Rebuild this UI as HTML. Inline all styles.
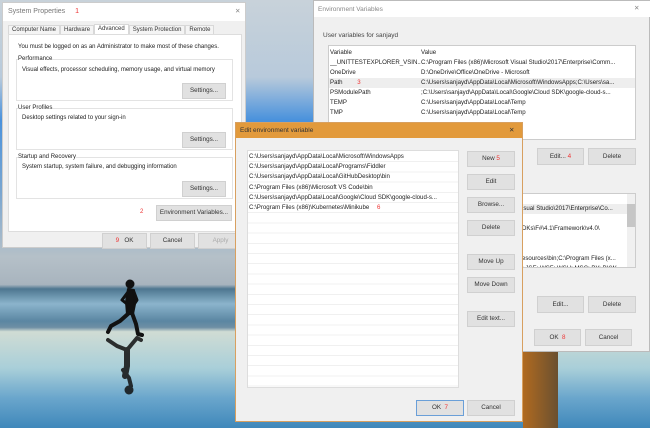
<!DOCTYPE html>
<html><head><meta charset="utf-8"><style>
*{margin:0;padding:0;box-sizing:border-box}
body{width:650px;height:428px;overflow:hidden;position:relative;font-family:"Liberation Sans",sans-serif;font-size:6.5px;color:#222;
background:linear-gradient(180deg,#c8d2da 0%,#b8cadb 18%,#4a92dc 28%,#7aa6d0 45%,#b5c0c8 60%,#a8b4be 66.5%,#4d7690 67.5%,#8bb4cc 71%,#5b86a2 75%,#6e8fa4 76.5%,#d0dcd4 77.5%,#a9cfd9 86%,#6aa6cc 93%,#3f88ba 100%)}
.a{position:absolute}
.w{position:absolute;background:#fff;border:1px solid #9aa}
.btn{position:absolute;background:#e1e1e1;border:1px solid #d0d0d0;text-align:center;line-height:14px;font-size:6.3px;color:#333}
.r{color:#e33}
.g{position:absolute;border:1px solid #e3e3e3;background:#fff}
</style></head><body>
<!-- runner -->
<svg class="a" style="left:95px;top:270px" width="60" height="130" viewBox="0 0 60 130">
<g fill="#111" stroke="#111" stroke-linecap="round" stroke-linejoin="round">
<circle cx="35" cy="14" r="4.5" stroke="none"/>
<path d="M33 19 L39 20 L40 34 L38 44 L32 44 L31 32 Z" stroke-width="2"/>
<path d="M33 22 L27 30 L32 34" fill="none" stroke-width="3"/>
<path d="M39 22 L42 30 L40 33" fill="none" stroke-width="3"/>
<path d="M34 43 L25 51 L16 56 L13 62" fill="none" stroke-width="4"/>
<path d="M37 43 L41 54 L43 64 L47 65" fill="none" stroke-width="4"/>
<g opacity=".85">
<path d="M13 70 L22 76 L32 80 L42 68 L46 70" fill="none" stroke-width="4"/>
<path d="M32 80 L32 96 L30 106" fill="none" stroke-width="6"/>
<path d="M28 100 L34 108 L36 116" fill="none" stroke-width="4"/>
<circle cx="34" cy="120" r="4.5" stroke="none"/>
</g></g></svg>
<div class="a" style="left:523px;top:352px;width:35px;height:76px;background:linear-gradient(90deg,#b06a20,#6a5030)"></div>

<!-- System Properties -->
<div class="w" style="left:2px;top:2px;width:244px;height:246px;background:#f0f0f0;border-color:#ccc">
 <div class="a" style="left:0;top:0;width:242px;height:18px;background:#fff"></div>
 <div class="a" style="left:5px;top:5px;color:#777;font-size:7px">System Properties <span class="r" style="margin-left:8px">1</span></div>
 <div class="a" style="left:232px;top:4px;color:#888">✕</div>
 <div class="a" style="left:5px;top:22px;color:#333;white-space:nowrap;font-size:6px">
  <span style="display:inline-block;border:1px solid #d8d8d8;padding:1px 3px;background:#f4f4f4">Computer Name</span><span style="display:inline-block;border:1px solid #d8d8d8;padding:1px 3px;background:#f4f4f4">Hardware</span><span style="display:inline-block;border:1px solid #d8d8d8;border-bottom:none;padding:1px 3px 2px;background:#fff;position:relative;top:-1px">Advanced</span><span style="display:inline-block;border:1px solid #d8d8d8;padding:1px 3px;background:#f4f4f4">System Protection</span><span style="display:inline-block;border:1px solid #d8d8d8;padding:1px 3px;background:#f4f4f4">Remote</span></div>
 <div class="a" style="left:5px;top:31px;width:234px;height:198px;background:#fff;border:1px solid #ddd;font-size:6px">
  <div class="a" style="left:9px;top:9px">You must be logged on as an Administrator to make most of these changes.</div>
  <div class="g" style="left:7px;top:24px;width:217px;height:42px"></div><div class="a" style="left:9px;top:21px;background:#fff">Performance</div>
  <div class="a" style="left:13px;top:32px">Visual effects, processor scheduling, memory usage, and virtual memory</div>
  <div class="btn" style="left:173px;top:48px;width:44px">Settings...</div>
  <div class="g" style="left:7px;top:73px;width:217px;height:42px"></div><div class="a" style="left:9px;top:70px;background:#fff">User Profiles</div>
  <div class="a" style="left:13px;top:80px">Desktop settings related to your sign-in</div>
  <div class="btn" style="left:173px;top:97px;width:44px">Settings...</div>
  <div class="g" style="left:7px;top:122px;width:217px;height:42px"></div><div class="a" style="left:9px;top:119px;background:#fff">Startup and Recovery</div>
  <div class="a" style="left:13px;top:129px">System startup, system failure, and debugging information</div>
  <div class="btn" style="left:173px;top:146px;width:44px">Settings...</div>
  <div class="a r" style="left:131px;top:174px">2</div>
  <div class="btn" style="left:147px;top:170px;width:76px">Environment Variables...</div>
 </div>
 <div class="btn" style="left:99px;top:230px;width:45px"><span class="r">9</span>&nbsp;&nbsp; OK</div>
 <div class="btn" style="left:147px;top:230px;width:45px">Cancel</div>
 <div class="btn" style="left:195px;top:230px;width:45px;color:#aaa">Apply</div>
</div>

<!-- Environment Variables -->
<div class="w" style="left:313px;top:0;width:337px;height:352px;background:#f0f0f0;border-color:#bbb">
 <div class="a" style="left:0;top:0;width:336px;height:16px;background:#fff"></div>
 <div class="a" style="left:4px;top:5px;color:#888;font-size:6.5px">Environment Variables</div>
 <div class="a" style="left:320px;top:3px;color:#888">✕</div>
 <div class="a" style="left:9px;top:31px;color:#444">User variables for sanjayd</div>
 <div class="a" style="left:14px;top:44px;width:308px;height:95px;background:#fff;border:1px solid #ccc;line-height:10px;font-size:6.1px;white-space:nowrap;overflow:hidden">
  <div style="padding:2px 0 0 1px;display:flex"><span style="width:91px">Variable</span>Value</div>
  <div style="display:flex;padding-left:1px"><span style="width:91px;overflow:hidden">__UNITTESTEXPLORER_VSIN...</span>C:\Program Files (x86)\Microsoft Visual Studio\2017\Enterprise\Comm...</div>
  <div style="display:flex;padding-left:1px"><span style="width:91px">OneDrive</span>D:\OneDrive\Office\OneDrive - Microsoft</div>
  <div style="display:flex;padding-left:1px;background:#eee"><span style="width:91px">Path <span class="r" style="margin-left:13px">3</span></span>C:\Users\sanjayd\AppData\Local\Microsoft\WindowsApps;C:\Users\sa...</div>
  <div style="display:flex;padding-left:1px"><span style="width:91px">PSModulePath</span>;C:\Users\sanjayd\AppData\Local\Google\Cloud SDK\google-cloud-s...</div>
  <div style="display:flex;padding-left:1px"><span style="width:91px">TEMP</span>C:\Users\sanjayd\AppData\Local\Temp</div>
  <div style="display:flex;padding-left:1px"><span style="width:91px">TMP</span>C:\Users\sanjayd\AppData\Local\Temp</div>
 </div>
 <div class="btn" style="left:223px;top:147px;width:47px;height:17px;line-height:16px">Edit... <span class="r">4</span></div>
 <div class="btn" style="left:274px;top:147px;width:48px;height:17px;line-height:16px">Delete</div>
 <div class="a" style="left:207px;top:192px;width:115px;height:75px;background:#fff;border:1px solid #ccc;line-height:10px;font-size:6.1px;white-space:nowrap;overflow:hidden">
  <div style="margin-top:10px;background:#eee">isual Studio\2017\Enterprise\Co...</div>
  <div style="margin-top:10px">DKs\F#\4.1\Framework\v4.0\</div>
  <div style="margin-top:20px">esources\bin;C:\Program Files (x...</div>
  <div>;.JSE;.WSF;.WSH;.MSC;.PY;.PYW</div>
  <div class="a" style="right:0;top:0;width:8px;height:73px;background:#f0f0f0"><div style="margin-top:10px;height:23px;background:#c6c6c6"></div></div>
 </div>
 <div class="btn" style="left:223px;top:295px;width:47px;height:17px;line-height:16px">Edit...</div>
 <div class="btn" style="left:274px;top:295px;width:48px;height:17px;line-height:16px">Delete</div>
 <div class="btn" style="left:220px;top:328px;width:47px;height:17px;line-height:16px">OK &nbsp;<span class="r">8</span></div>
 <div class="btn" style="left:271px;top:328px;width:47px;height:17px;line-height:16px">Cancel</div>
</div>

<!-- Edit environment variable -->
<div class="w" style="left:235px;top:122px;width:288px;height:300px;background:#f0f0f0;border-color:#d8a060">
 <div class="a" style="left:0;top:0;width:286px;height:15px;background:#e29a3c"></div>
 <div class="a" style="left:4px;top:4px;color:#333;font-size:6.5px">Edit environment variable</div>
 <div class="a" style="left:273px;top:3px;color:#333">✕</div>
 <div class="a" style="left:11px;top:27px;width:212px;height:238px;background:#fff;border:1px solid #ddd;line-height:10.2px;font-size:6.1px;white-space:nowrap;padding-left:1px;
 background-image:repeating-linear-gradient(180deg,transparent 0 9.2px,#f0f0f0 9.2px 10.2px);background-position:0 1px">
  <div style="margin-top:1px">C:\Users\sanjayd\AppData\Local\Microsoft\WindowsApps</div>
  <div>C:\Users\sanjayd\AppData\Local\Programs\Fiddler</div>
  <div>C:\Users\sanjayd\AppData\Local\GitHubDesktop\bin</div>
  <div>C:\Program Files (x86)\Microsoft VS Code\bin</div>
  <div>C:\Users\sanjayd\AppData\Local\Google\Cloud SDK\google-cloud-s...</div>
  <div>C:\Program Files (x86)\Kubernetes\Minikube <span class="r" style="margin-left:6px">6</span></div>
 </div>
 <div class="btn" style="left:231px;top:28px;width:48px;height:16px">New <span class="r">5</span></div>
 <div class="btn" style="left:231px;top:51px;width:48px;height:16px">Edit</div>
 <div class="btn" style="left:231px;top:74px;width:48px;height:16px">Browse...</div>
 <div class="btn" style="left:231px;top:97px;width:48px;height:16px">Delete</div>
 <div class="btn" style="left:231px;top:131px;width:48px;height:16px">Move Up</div>
 <div class="btn" style="left:231px;top:154px;width:48px;height:16px">Move Down</div>
 <div class="btn" style="left:231px;top:188px;width:48px;height:16px">Edit text...</div>
 <div class="btn" style="left:180px;top:277px;width:48px;height:16px;border-color:#6a9fd8">OK &nbsp;<span class="r">7</span></div>
 <div class="btn" style="left:231px;top:277px;width:48px;height:16px">Cancel</div>
</div>
</body></html>
